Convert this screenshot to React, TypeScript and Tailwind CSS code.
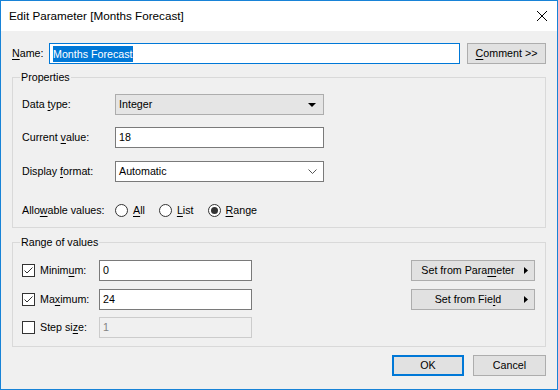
import React from 'react';

const U = ({ children }: { children: React.ReactNode }) => <span className="underline underline-offset-[2px]">{children}</span>;

function Radio({ checked, children }: { checked?: boolean; children: React.ReactNode }) {
  return (
    <div className="flex items-center">
      <span className="flex h-[13px] w-[13px] items-center justify-center rounded-full border border-[#333] bg-white">
        {checked && <span className="h-[7px] w-[7px] rounded-full bg-[#333]" />}
      </span>
      <span className="ml-[5px]">{children}</span>
    </div>
  );
}

function Check({ checked }: { checked?: boolean }) {
  return (
    <span className="flex h-[13px] w-[13px] items-center justify-center border border-[#333] bg-white">
      {checked && (
        <svg width="11" height="11" viewBox="0 0 11 11">
          <path d="M1.5 5.5 L4 8 L9.5 2.5" fill="none" stroke="#333" strokeWidth="1" />
        </svg>
      )}
    </span>
  );
}

function Button({ children, className = '' }: { children: React.ReactNode; className?: string }) {
  return (
    <div className={`flex h-[21px] items-center justify-center border border-[#adadad] bg-[#e1e1e1] ${className}`}>
      {children}
    </div>
  );
}

function ArrowButton({ children }: { children: React.ReactNode }) {
  return (
    <div className="flex h-[21px] w-[124px] items-center border border-[#adadad] bg-[#e1e1e1] pr-[6px]">
      <span className="flex-1 text-center">{children}</span>
      <svg width="4" height="7" viewBox="0 0 4 7">
        <path d="M0 0 L4 3.5 L0 7 Z" fill="#000" />
      </svg>
    </div>
  );
}

export default function App() {
  return (
    <div className="flex h-[390px] w-[558px] flex-col border border-[#1883d7] font-['Liberation_Sans',Arial,sans-serif] text-black">
      <div className="flex h-[30px] items-center justify-between bg-white pl-[8px] pr-[10px]">
        <span className="text-[11.7px]">Edit Parameter [Months Forecast]</span>
        <svg width="10" height="10" viewBox="0 0 10 10">
          <path d="M0 0 L10 10 M10 0 L0 10" stroke="#000" strokeWidth="1" />
        </svg>
      </div>

      <div className="flex flex-1 flex-col bg-[#f0f0f0] px-[11px] pt-[12px] text-[10.7px]">
        <div className="flex h-[21px] items-center">
          <span className="w-[37px]">
            <U>N</U>ame:
          </span>
          <div className="flex h-[21px] w-[411px] items-center border border-[#0078d7] bg-white pl-[3px]">
            <span className="inline-block h-[16px] bg-[#0078d7] text-white leading-[16px]">Months Forecast</span>
          </div>
          <Button className="ml-auto w-[79px]">
            <span>
              <U>C</U>omment &gt;&gt;
            </span>
          </Button>
        </div>

        <fieldset className="mt-[6px] border border-[#d9d9d9] px-[9px] pb-[6px] pt-[10px]">
          <legend className="-ml-[2px] px-[1px] leading-[14px]">Properties</legend>
          <div className="flex h-[21px] items-center">
            <span className="w-[93px]">
              Data <U>t</U>ype:
            </span>
            <div className="flex h-[21px] w-[209px] items-center justify-between border border-[#adadad] bg-[#e5e5e5] pl-[3px] pr-[7px]">
              <span>Integer</span>
              <svg width="8" height="4" viewBox="0 0 8 4">
                <path d="M0 0 L8 0 L4 4 Z" fill="#000" />
              </svg>
            </div>
          </div>
          <div className="mt-[12px] flex h-[21px] items-center">
            <span className="w-[93px]">
              Current <U>v</U>alue:
            </span>
            <div className="flex h-[21px] w-[209px] items-center border border-[#7a7a7a] bg-white pl-[3px]">18</div>
          </div>
          <div className="mt-[13px] flex h-[21px] items-center">
            <span className="w-[93px]">
              Display <U>f</U>ormat:
            </span>
            <div className="flex h-[21px] w-[209px] items-center justify-between border border-[#7a7a7a] bg-white pl-[3px] pr-[6px]">
              <span>Automatic</span>
              <svg width="9" height="5" viewBox="0 0 9 5">
                <path d="M0.5 0.5 L4.5 4.5 L8.5 0.5" fill="none" stroke="#555" strokeWidth="1" />
              </svg>
            </div>
          </div>
          <div className="mt-[18px] flex h-[21px] items-center">
            <span className="w-[93px]">
              Allo<U>w</U>able values:
            </span>
            <div className="flex items-center gap-[14px]">
              <Radio>
                <U>A</U>ll
              </Radio>
              <Radio>
                <U>L</U>ist
              </Radio>
              <Radio checked>
                <U>R</U>ange
              </Radio>
            </div>
          </div>
        </fieldset>

        <fieldset className="mt-[7px] border border-[#d9d9d9] pb-[8px] pl-[9px] pr-[10px] pt-[11px]">
          <legend className="-ml-[2px] px-[1px] leading-[14px]">Range of values</legend>
          <div className="flex h-[21px] items-center">
            <div className="flex w-[77px] items-center gap-[5px]">
              <Check checked />
              <span>
                Minim<U>u</U>m:
              </span>
            </div>
            <div className="flex h-[21px] w-[153px] items-center border border-[#7a7a7a] bg-white pl-[3px]">0</div>
            <div className="ml-auto">
              <ArrowButton>
                Set from Para<U>m</U>eter
              </ArrowButton>
            </div>
          </div>
          <div className="mt-[8px] flex h-[21px] items-center">
            <div className="flex w-[77px] items-center gap-[5px]">
              <Check checked />
              <span>
                Ma<U>x</U>imum:
              </span>
            </div>
            <div className="flex h-[21px] w-[153px] items-center border border-[#7a7a7a] bg-white pl-[3px]">24</div>
            <div className="ml-auto">
              <ArrowButton>
                Set from Fie<U>l</U>d
              </ArrowButton>
            </div>
          </div>
          <div className="mt-[7px] flex h-[21px] items-center">
            <div className="flex w-[77px] items-center gap-[5px]">
              <Check />
              <span>
                Step si<U>z</U>e:
              </span>
            </div>
            <div className="flex h-[21px] w-[153px] items-center border border-[#cccccc] bg-[#f0f0f0] pl-[3px] text-[#838383]">
              1
            </div>
          </div>
        </fieldset>

        <div className="mt-[8px] flex justify-end gap-[9px]">
          <div className="flex h-[21px] w-[72px] items-center justify-center border-2 border-[#0078d7] bg-[#e1e1e1]">OK</div>
          <Button className="w-[73px]">Cancel</Button>
        </div>
      </div>
    </div>
  );
}
